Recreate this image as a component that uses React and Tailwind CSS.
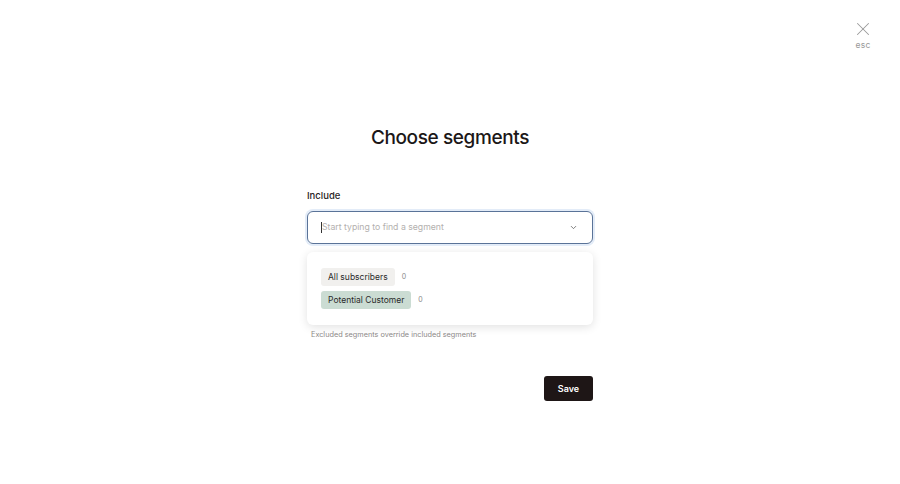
import { ChevronDown, X } from 'lucide-react';

const segments = [
  { name: 'All subscribers', count: 0, selected: false },
  { name: 'Potential Customer', count: 0, selected: true },
];

export default function App() {
  return (
    <div className="relative w-[900px] h-[484px] bg-white font-['Inter',sans-serif] text-[#1c1717]">
      {/* close */}
      <button className="absolute right-[26px] top-[18px] flex flex-col items-center text-[#9a9a9a]">
        <X className="w-[22px] h-[22px]" strokeWidth={1.1} />
        <span className="text-[8.5px] leading-none mt-[1px] tracking-wide">esc</span>
      </button>

      <div className="flex flex-col items-center pt-[126px]">
        <h1 className="text-[19px] font-medium leading-[24px] tracking-[-0.02em]">Choose segments</h1>

        <div className="w-[286px] mt-[40px]">
          <label className="block text-[9.5px] font-medium text-[#2a2424] leading-[12px]">Include</label>

          <div className="mt-[9px] h-[33px] rounded-[6px] border border-[#5a7398] ring-2 ring-[#e3ecf8] flex items-center justify-between pl-[13px] pr-[14px]">
            <div className="flex items-center">
              <span className="w-px h-[11px] bg-[#333]" />
              <span className="text-[8.7px] text-[#b3b0ae]">Start typing to find a segment</span>
            </div>
            <ChevronDown className="w-[9px] h-[9px] text-[#555]" strokeWidth={2} />
          </div>

          <div className="mt-[8px] rounded-[6px] bg-white shadow-[0_2px_10px_rgba(0,0,0,0.12)] px-[14px] pt-[16px] pb-[16px] flex flex-col gap-[5px]">
            {segments.map((s) => (
              <div key={s.name} className="flex items-center gap-[7px]">
                <span
                  className={
                    s.selected
                      ? 'px-[7px] h-[18px] flex items-center rounded-[3px] bg-[#cbdcd3] text-[8.5px] text-[#2a2a2a]'
                      : 'px-[7px] h-[18px] flex items-center rounded-[3px] bg-[#f1f0ee] text-[8.5px] text-[#2a2a2a]'
                  }
                >
                  {s.name}
                </span>
                <span className="text-[7px] text-[#8a8a8a]">{s.count}</span>
              </div>
            ))}
          </div>

          <p className="mt-[5px] pl-[4px] text-[7.3px] text-[#8c8886]">Excluded segments override included segments</p>

          <div className="flex justify-end mt-[35px]">
            <button className="w-[49px] h-[25px] rounded-[3px] bg-[#1e1616] text-white text-[9px] font-semibold">Save</button>
          </div>
        </div>
      </div>
    </div>
  );
}
